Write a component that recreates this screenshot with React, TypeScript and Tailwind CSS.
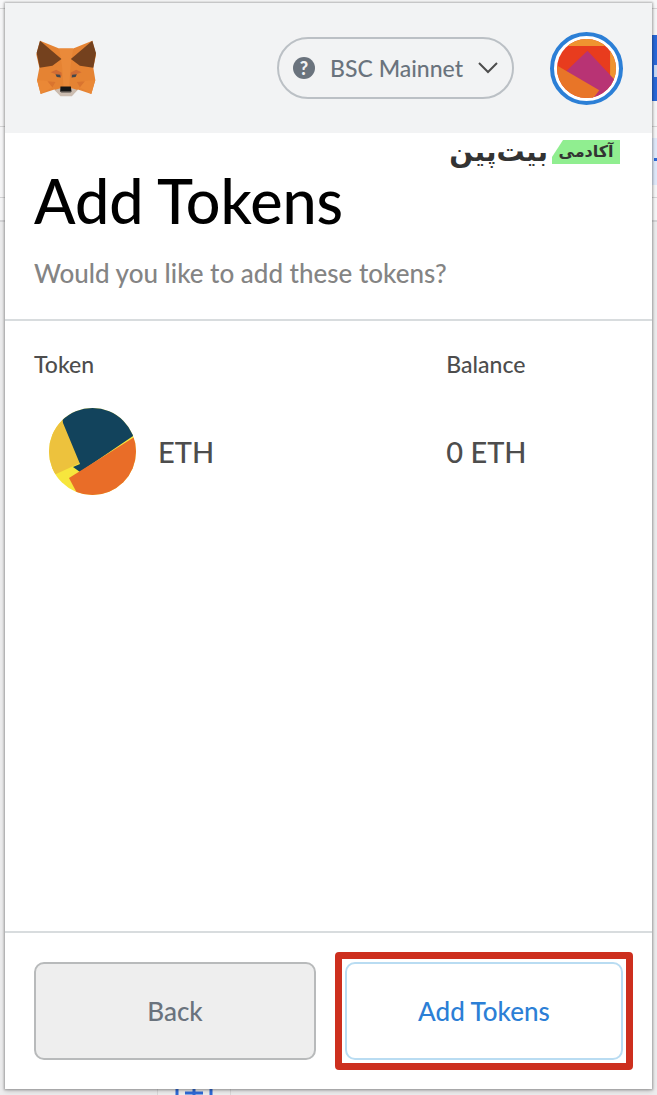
type Token = {
  symbol: string;
  balance: string;
};

const tokens: Token[] = [{ symbol: "ETH", balance: "0 ETH" }];

function Fox() {
  return (
    <svg viewBox="48 42 182 170" className="h-[57px] w-[61px]" aria-hidden="true">
      {/* face */}
      <path d="m60 44 57 23h42l57-23 11 43-8 38 6 36-12 42-40-13-18 17h-34l-18-17-41 13-11-42 7-36-9-40z" fill="#e58333" />
      <path d="M117 67h42l-8 55-4 60h-17l-4-60z" fill="#ea8a3a" />
      <path d="m51 161 35 3 10 20-34 19zM225 161l-37 3-8 20 33 19z" fill="#ea8836" />
      <path d="m82 165 24 2-9 16zM194 165l-24 2 9 16z" fill="#d9742f" />
      {/* ears */}
      <path d="m60 44 64 55-27 20-38 6-9-45z" fill="#74411e" />
      <path d="m216 44-64 55 27 20 40 6 8-44z" fill="#74411e" />
      {/* brow and eyes */}
      <path d="m92 138 16-7 16 8 1 12zM184 138l-16-7-16 8-1 12z" fill="#d06c34" />
      <path d="m106 144 14 2 2 8-12-2zM170 144l-14 2-2 8 12-2z" fill="#42474d" />
      {/* muzzle */}
      <path d="m103 191 18-5h34l17 5-17 19h-34z" fill="#cbbcb0" />
      <path d="M121 181h31l2 15h-34z" fill="#161616" />
      <path d="M121 196h33l-3 4h-27z" fill="#8b8179" />
    </svg>
  );
}

function AccountAvatar() {
  return (
    <svg viewBox="0 0 60 60" className="h-full w-full rounded-full" aria-hidden="true">
      <rect width="60" height="60" fill="#e83c1e" />
      <path d="M0 0h60v60h-6V7H0z" fill="#ef9430" />
      <path d="m31 12 29 31v17H36L9 33z" fill="#b83374" />
      <path d="m0 27 43 25-6 8H0z" fill="#e87528" />
    </svg>
  );
}

function TokenIcon() {
  return (
    <svg viewBox="0 0 87 87" className="size-[87px] rounded-full" aria-hidden="true">
      <rect width="87" height="87" fill="#f7e63d" />
      <path d="M0 0h14l17 55L5 67H0z" fill="#edc23d" />
      <path d="M12 0h75v26L31 64l-7-5 7-3-17-41z" fill="#12435c" />
      <path d="M87 28 20 70l9 17h58z" fill="#e96d28" />
    </svg>
  );
}

// Slivers of the page that stays visible around the popup
function PageBehind() {
  return (
    <div className="absolute inset-0 overflow-hidden bg-[#ededee]" aria-hidden="true">
      <div className="absolute inset-x-0 top-0 h-[222px] border-b-2 border-[#d6d6d8] bg-[#f7f7f8]">
        <div className="mt-2 h-[119px] border-y border-[#d5d5d6]" />
        <div className="h-[71px] border-b border-[#d5d5d6]" />
      </div>
      <div className="absolute right-0 top-[35px] flex h-[66px] w-4 items-end justify-end bg-[#2a68d8] pb-6">
        <span className="h-3 w-[3px] bg-[#c8d8f5]" />
      </div>
      <div className="absolute right-0 top-[138px] h-[47px] w-4 bg-[#e0eafb]" />
      <div className="absolute right-0 top-[158px] h-[3px] w-[3px] bg-[#2a68d8]" />
      <div className="absolute bottom-0 left-[157px] flex h-5 w-[74px] items-end justify-center border-x border-[#dadada] bg-[#efefef]">
        <svg viewBox="0 0 38 8" className="h-2 w-[38px]">
          <path d="M2 0v8M36 0v8M10 6h18M19 2v6" stroke="#2f6bd8" strokeWidth="3" />
        </svg>
      </div>
    </div>
  );
}

function Watermark() {
  return (
    <div
      dir="rtl"
      lang="fa"
      className="absolute right-8 top-[137px] flex h-6 items-center gap-1 font-['DejaVu_Sans',sans-serif] font-bold text-[#333]"
    >
      <span className="relative flex h-6 w-[68px] items-center justify-center text-[16px] leading-5">
        <svg viewBox="0 0 68 24" className="absolute inset-0 h-full w-full" aria-hidden="true">
          <path d="M11 0h57v24H0v-7z" fill="#90ee90" />
        </svg>
        <span className="relative">آکادمی</span>
      </span>
      <span className="text-[28px] leading-5">بیت‌پین</span>
    </div>
  );
}

export default function App() {
  return (
    <div className="relative flex min-h-screen flex-col px-[5px] pb-[6px] pt-[3px] font-[Lato,sans-serif] font-medium">
      <PageBehind />

      <main className="relative flex flex-1 flex-col bg-white shadow-[0_0_2px_1px_rgba(0,0,0,0.25),0_2px_5px_rgba(0,0,0,0.2)]">
        {/* Header */}
        <header className="flex h-[130px] items-center bg-[#f2f3f4] pl-[31px] pr-[29px]">
          <Fox />
          <button
            type="button"
            className="ml-auto flex h-[62px] items-center rounded-full border-2 border-[#bbc0c5] px-[14px] text-[23px] text-[#6a737d]"
          >
            <span className="flex size-[22px] items-center justify-center rounded-full bg-[#6a737d] text-[18px] font-black leading-[22px] text-[#f2f3f4]">
              ?
            </span>
            <span className="mx-[15px] whitespace-nowrap">BSC Mainnet</span>
            <svg viewBox="0 0 20 12" className="h-3 w-5" aria-hidden="true">
              <path d="m1 1 9 9 9-9" fill="none" stroke="#4d4d4d" strokeWidth="2" />
            </svg>
          </button>
          <button
            type="button"
            aria-label="Account"
            className="ml-9 size-[73px] rounded-full border-4 border-[#2c7fd6] bg-white p-[3px]"
          >
            <AccountAvatar />
          </button>
        </header>

        <Watermark />

        {/* Title */}
        <section className="h-[188px] border-b-2 border-[#d8dcde] px-[29px] pt-[34px]">
          <h1 className="text-[61px] leading-[68px] text-black">Add Tokens</h1>
          <p className="mt-[22px] text-[26px] leading-8 text-[#848484]">
            Would you like to add these tokens?
          </p>
        </section>

        {/* Token list */}
        <section className="flex-1 px-[29px] pt-[27px]">
          <table className="w-full table-fixed text-left text-[#4d4d4d]">
            <thead>
              <tr className="text-[23px] leading-8">
                <th className="w-[70%] font-medium">Token</th>
                <th className="font-medium">Balance</th>
              </tr>
            </thead>
            <tbody className="text-[29px]">
              {tokens.map((token) => (
                <tr key={token.symbol}>
                  <td className="pt-7">
                    <div className="flex items-center gap-[22px] pl-[15px]">
                      <TokenIcon />
                      <span>{token.symbol}</span>
                    </div>
                  </td>
                  <td className="pt-7">{token.balance}</td>
                </tr>
              ))}
            </tbody>
          </table>
        </section>

        {/* Actions */}
        <footer className="flex gap-[29px] border-t-2 border-[#d8dcde] px-[29px] pb-[29px] pt-[29px] text-[26px]">
          <button
            type="button"
            className="h-[98px] flex-1 rounded-[10px] border-2 border-[#b8babb] bg-[#eeeeee] text-[#6a737d]"
          >
            Back
          </button>
          <div className="relative flex-1">
            <button
              type="button"
              className="h-[98px] w-full rounded-[10px] border-2 border-[#b9dcf2] bg-white text-[#2c7fd6]"
            >
              Add Tokens
            </button>
            <span className="pointer-events-none absolute -inset-[10px] rounded border-[7px] border-[#cd2f1e]" />
          </div>
        </footer>
      </main>
    </div>
  );
}
